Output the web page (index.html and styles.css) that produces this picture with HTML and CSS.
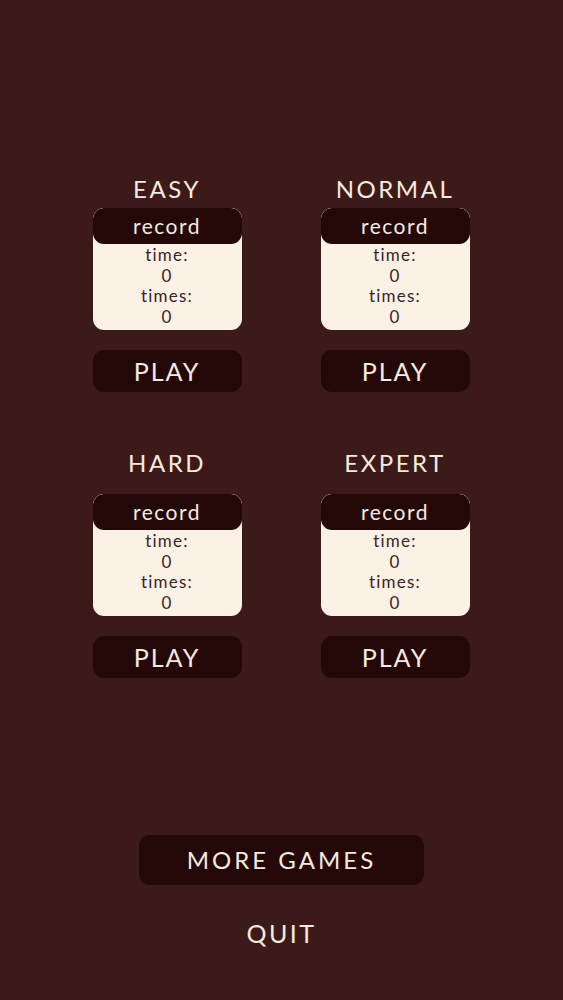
FILE: index.html
```html
<!DOCTYPE html>
<html>
<head>
<meta charset="utf-8">
<link rel="stylesheet" href="styles.css">
</head>
<body>
<div class="screen">
  <div class="grid">
    <div class="level">
      <div class="title">EASY</div>
      <div class="card">
        <div class="card-head">record</div>
        <div class="card-body">
          <div>time:</div><div>0</div><div>times:</div><div>0</div>
        </div>
      </div>
      <div class="btn play">PLAY</div>
    </div>
    <div class="level">
      <div class="title">NORMAL</div>
      <div class="card">
        <div class="card-head">record</div>
        <div class="card-body">
          <div>time:</div><div>0</div><div>times:</div><div>0</div>
        </div>
      </div>
      <div class="btn play">PLAY</div>
    </div>
    <div class="level lower">
      <div class="title">HARD</div>
      <div class="card">
        <div class="card-head">record</div>
        <div class="card-body">
          <div>time:</div><div>0</div><div>times:</div><div>0</div>
        </div>
      </div>
      <div class="btn play">PLAY</div>
    </div>
    <div class="level lower">
      <div class="title">EXPERT</div>
      <div class="card">
        <div class="card-head">record</div>
        <div class="card-body">
          <div>time:</div><div>0</div><div>times:</div><div>0</div>
        </div>
      </div>
      <div class="btn play">PLAY</div>
    </div>
  </div>
  <div class="btn more">MORE GAMES</div>
  <div class="quit">QUIT</div>
</div>
</body>
</html>
```
FILE: styles.css
```css
html, body {
  margin: 0;
  padding: 0;
}
body {
  background: #3d1a1a;
  font-family: Lato, "Open Sans", sans-serif;
  color: #f6e9df;
}
.screen {
  width: 563px;
  height: 1000px;
  display: flex;
  flex-direction: column;
  align-items: center;
  padding-top: 174px;
  box-sizing: border-box;
}
.grid {
  display: grid;
  grid-template-columns: 149px 149px;
  column-gap: 79px;
  row-gap: 56px;
  margin-right: 1px;
}
.level {
  display: flex;
  flex-direction: column;
}
.title {
  height: 30px;
  line-height: 30px;
  text-align: center;
  font-size: 24px;
  letter-spacing: 2.5px;
  margin-bottom: 4px;
}
.level.lower .title {
  margin-bottom: 16px;
}
.card {
  height: 122px;
  background: #fcf1e5;
  border-radius: 11px;
  display: flex;
  flex-direction: column;
  overflow: hidden;
}
.card-head {
  height: 36px;
  background: #240808;
  border-radius: 11px;
  text-align: center;
  line-height: 36px;
  font-size: 21px;
  letter-spacing: 1.5px;
}
.card-body {
  color: #3c2424;
  text-align: center;
  font-size: 17px;
  line-height: 20.5px;
  letter-spacing: 1.2px;
  padding-top: 1px;
}
.btn {
  background: #240808;
  border-radius: 11px;
  text-align: center;
}
.play {
  margin-top: 20px;
  height: 42px;
  line-height: 42px;
  font-size: 25px;
  letter-spacing: 2px;
}
.more {
  margin-top: 157px;
  width: 285px;
  height: 50px;
  line-height: 50px;
  font-size: 24px;
  letter-spacing: 3px;
}
.quit {
  margin-top: 33px;
  height: 30px;
  line-height: 30px;
  font-size: 25px;
  letter-spacing: 2.5px;
}
```
